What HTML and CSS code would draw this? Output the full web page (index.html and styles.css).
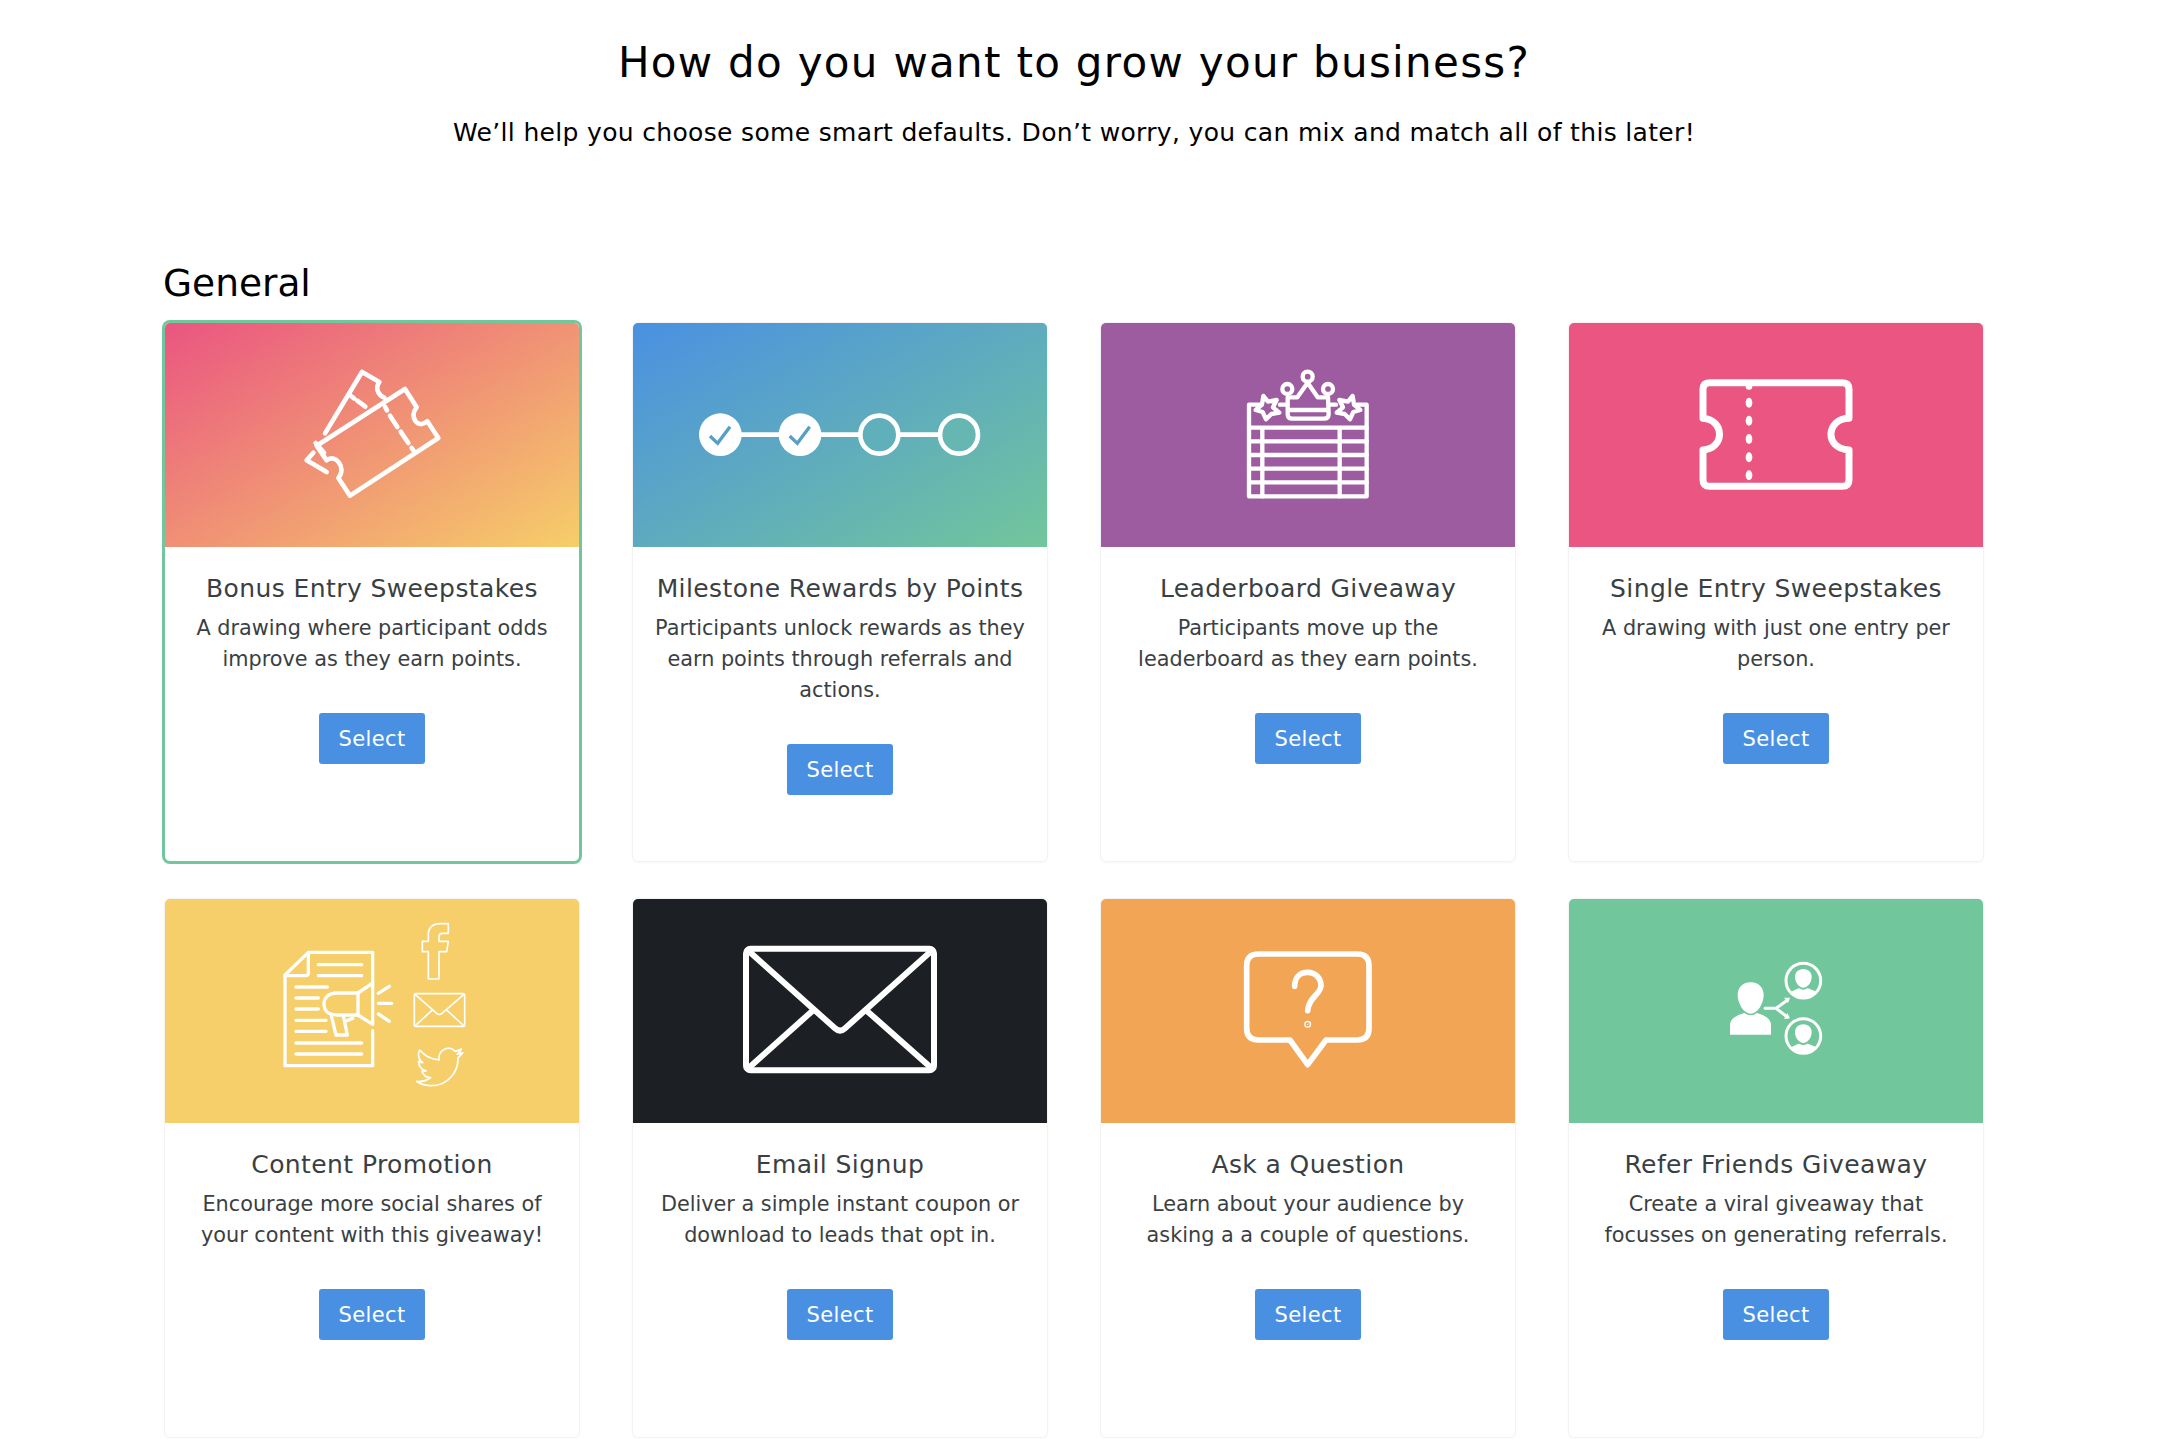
FILE: index.html
```html
<!DOCTYPE html>
<html lang="en">
<head>
    <meta charset="UTF-8">
    <title>Choose a giveaway</title>
    <link rel="stylesheet" href="styles.css">
</head>
<body>
    <div class="page">
        <header class="intro">
            <h1>How do you want to grow your business?</h1>
            <p>We’ll help you choose some smart defaults. Don’t worry, you can mix and match all of this later!</p>
        </header>

        <h2 class="section-title">General</h2>

        <div class="card-grid">
            <div class="card selected">
                <div class="banner bg-sunset">
                    <svg viewBox="45 0 1242 672" class="icon line" stroke-width="14">
                        <path d="M525 331 L636 147 L688 177 C672 200 690 219 703 224"/>
                        <path d="M497 360 L522 389 M470 412 L490 389 M470 412 L530 447"/>
                        <path d="M603 219 L612 226 M622 233 L646 251"/>
                        <path d="M500 368 L765 198 L800 253 C775 282 805 320 832 295 L865 345 L600 518 L565 465 C592 434 555 390 530 412 Z"/>
                        <path d="M705 251 L711 262 M720 278 L742 312 M752 326 L775 360 M785 375 L790 382"/>
                    </svg>
                </div>
                <div class="card-body">
                    <h3>Bonus Entry Sweepstakes</h3>
                    <p>A drawing where participant odds improve as they earn points.</p>
                    <a class="btn">Select</a>
                </div>
            </div>

            <div class="card">
                <div class="banner bg-ocean">
                    <svg viewBox="39 39 1242 672" class="icon">
                        <path d="M301 374 H1017" class="line" stroke-width="14"/>
                        <circle cx="301" cy="374" r="64" fill="#fff"/>
                        <circle cx="540" cy="374" r="64" fill="#fff"/>
                        <circle cx="778" cy="374" r="57" fill="#5fb0bb" stroke="#fff" stroke-width="14"/>
                        <circle cx="1017" cy="374" r="57" fill="#66b6b2" stroke="#fff" stroke-width="14"/>
                        <path d="M270 378 L293 400 L330 350" fill="none" stroke="#539fc6" stroke-width="10"/>
                        <path d="M509 378 L532 400 L569 350" fill="none" stroke="#579fc4" stroke-width="10"/>
                    </svg>
                </div>
                <div class="card-body">
                    <h3>Milestone Rewards by Points</h3>
                    <p>Participants unlock rewards as they earn points through referrals and actions.</p>
                    <a class="btn">Select</a>
                </div>
            </div>

            <div class="card">
                <div class="banner bg-purple">
                    <svg viewBox="33 39 1242 672" class="icon line" stroke-width="13">
                        <path d="M510 284 H477 V559 H830 V284 H800 M570 284 H592 M716 284 H738"/>
                        <path d="M477 353 H830 M477 394 H830 M477 435 H830 M477 476 H830 M477 517 H830 M517 353 V559 M749 353 V559"/>
                        <path d="M593 262 L593 312 Q593 326 606 326 H702 Q716 326 716 312 L714 262 L683 262 L653 218 L622 262 Z M596 300 H712"/>
                        <circle cx="592" cy="237" r="15"/>
                        <circle cx="653" cy="200" r="15"/>
                        <circle cx="714" cy="237" r="15"/>
                        <path class="star-purple" d="M520 258 L534 275 L560 270 L549 292 L568 308 L544 312 L528 328 L518 306 L497 300 L516 284 Z"/>
                        <path class="star-purple" d="M788 258 L774 275 L748 270 L759 292 L740 308 L764 312 L780 328 L790 306 L811 300 L792 284 Z"/>
                    </svg>
                </div>
                <div class="card-body">
                    <h3>Leaderboard Giveaway</h3>
                    <p>Participants move up the leaderboard as they earn points.</p>
                    <a class="btn">Select</a>
                </div>
            </div>

            <div class="card">
                <div class="banner bg-pink">
                    <svg viewBox="27 39 1242 672" class="icon">
                        <path class="line" stroke-width="21" d="M449 218 H847 Q867 218 867 238 V325 C800 325 790 415 867 420 V509 Q867 529 847 529 H449 Q429 529 429 509 V420 C495 415 495 330 429 325 V238 Q429 218 449 218 Z"/>
                        <g fill="#fff">
                            <ellipse cx="567" cy="230" rx="10" ry="9"/>
                            <ellipse cx="567" cy="278" rx="10" ry="15"/>
                            <ellipse cx="567" cy="332" rx="10" ry="15"/>
                            <ellipse cx="567" cy="387" rx="10" ry="15"/>
                            <ellipse cx="567" cy="442" rx="10" ry="15"/>
                            <ellipse cx="567" cy="496" rx="10" ry="15"/>
                        </g>
                    </svg>
                </div>
                <div class="card-body">
                    <h3>Single Entry Sweepstakes</h3>
                    <p>A drawing with just one entry per person.</p>
                    <a class="btn">Select</a>
                </div>
            </div>

            <div class="card">
                <div class="banner bg-yellow">
                    <svg viewBox="-225 0 1242 672" class="icon line" stroke-width="10">
                        <path d="M398 250 V160 H205 L135 228 V500 H398 V395"/>
                        <path d="M205 160 V222 Q205 230 197 230 H135"/>
                        <path d="M235 197 H365 M235 230 H365 M168 264 H262 M168 297 H235 M168 330 H235 M168 364 H258 M168 397 H258 M168 432 H365 M168 465 H365"/>
                        <path d="M354 282 H292 C262 282 252 300 252 315 C252 332 262 348 292 348 H354 Z"/>
                        <path d="M354 282 L398 252 V376 L354 348"/>
                        <path d="M274 350 L288 408 H322 L310 350 M318 366 L338 358"/>
                        <path d="M415 283 L448 262 M415 313 H455 M415 345 L448 367"/>
                        <path stroke-width="5" d="M565 240 V158 H547 V127 H565 V105 C565 85 580 74 600 74 H625 V103 H607 C600 103 597 107 597 113 V127 H625 L620 158 H597 V240 Z"/>
                        <rect x="523" y="284" width="151" height="98" rx="5" stroke-width="5"/>
                        <path stroke-width="5" d="M526 287 L590 343 Q598 350 606 343 L671 287 M526 380 L575 335 M671 380 L622 335"/>
                        <path transform="translate(530 435) scale(5.75)" stroke-width="0.9" d="M23.953 4.57a10 10 0 01-2.825.775 4.958 4.958 0 002.163-2.723c-.951.555-2.005.959-3.127 1.184a4.92 4.92 0 00-8.384 4.482C7.69 8.095 4.067 6.13 1.64 3.162a4.822 4.822 0 00-.666 2.475c0 1.71.87 3.213 2.188 4.096a4.904 4.904 0 01-2.228-.616v.06a4.923 4.923 0 003.946 4.827 4.996 4.996 0 01-2.212.085 4.936 4.936 0 004.604 3.417 9.867 9.867 0 01-6.102 2.105c-.39 0-.779-.023-1.17-.067a13.995 13.995 0 007.557 2.209c9.053 0 13.998-7.496 13.998-13.985 0-.21 0-.42-.015-.63A9.935 9.935 0 0024 4.59z"/>
                    </svg>
                </div>
                <div class="card-body">
                    <h3>Content Promotion</h3>
                    <p>Encourage more social shares of your content with this giveaway!</p>
                    <a class="btn">Select</a>
                </div>
            </div>

            <div class="card">
                <div class="banner bg-dark">
                    <svg viewBox="-261 -60 1242 672" class="icon line" stroke-width="18">
                        <rect x="78" y="89" width="564" height="365" rx="14"/>
                        <path d="M85 95 L345 328 Q360 342 375 328 L635 95"/>
                        <path d="M85 448 L278 275 M635 448 L440 275"/>
                    </svg>
                </div>
                <div class="card-body">
                    <h3>Email Signup</h3>
                    <p>Deliver a simple instant coupon or download to leads that opt in.</p>
                    <a class="btn">Select</a>
                </div>
            </div>

            <div class="card">
                <div class="banner bg-orange">
                    <svg viewBox="-357 -90 1242 672" class="icon line" stroke-width="17">
                        <path d="M115 75 H412 Q447 75 447 110 V298 Q447 333 412 333 H318 L263 407 L210 333 H115 Q80 333 80 298 V110 Q80 75 115 75 Z"/>
                        <path d="M224 172 C224 145 240 130 263 130 C287 130 303 148 303 170 C303 195 265 205 263 245"/>
                        <circle cx="263" cy="286" r="2" fill="#fff"/>
                    </svg>
                </div>
                <div class="card-body">
                    <h3>Ask a Question</h3>
                    <p>Learn about your audience by asking a a couple of questions.</p>
                    <a class="btn">Select</a>
                </div>
            </div>

            <div class="card">
                <div class="banner bg-green">
                    <svg viewBox="-393 -120 1242 672" class="icon">
                        <g fill="#fff">
                            <path d="M152 130 C178 130 192 148 191 170 C190 195 172 224 152 224 C132 224 114 195 113 170 C112 148 126 130 152 130 Z"/>
                            <path d="M90 287 V258 C90 238 112 228 133 222 Q152 236 171 222 C192 228 213 238 213 258 V287 Z"/>
                            <path d="M310 90 C326 90 336 102 335 116 C334 130 323 146 310 146 C297 146 286 130 285 116 C284 102 294 90 310 90 Z"/>
                            <path d="M272 160 C282 153 290 150 298 148 Q310 156 322 148 C330 150 340 153 350 160 C338 174 325 178 310 178 C295 178 282 174 272 160 Z"/>
                            <path d="M310 256 C326 256 336 268 335 282 C334 296 323 312 310 312 C297 312 286 296 285 282 C284 268 294 256 310 256 Z"/>
                            <path d="M272 326 C282 319 290 316 298 314 Q310 322 322 314 C330 316 340 319 350 326 C338 340 325 344 310 344 C295 344 282 340 272 326 Z"/>
                            <path d="M270 176 L252 176 L264 192 Z M270 238 L252 240 L262 222 Z"/>
                        </g>
                        <g class="line" stroke-width="9">
                            <circle cx="310" cy="125" r="52"/>
                            <circle cx="310" cy="291" r="52"/>
                            <path d="M195 208 H228 L262 184 M228 208 L262 234"/>
                        </g>
                    </svg>
                </div>
                <div class="card-body">
                    <h3>Refer Friends Giveaway</h3>
                    <p>Create a viral giveaway that focusses on generating referrals.</p>
                    <a class="btn">Select</a>
                </div>
            </div>
        </div>
    </div>
</body>
</html>
```

FILE: styles.css
```css
body {
    margin: 0;
    background-color: #fff;
    color: #000;
    font-family: "DejaVu Sans", Verdana, sans-serif;
}

.page {
    width: 1820px;
    margin: 0 176px 0 164px;
}

.intro {
    text-align: center;
    padding-top: 37px;
}

.intro h1 {
    font-size: 42px;
    font-weight: normal;
    letter-spacing: 1.3px;
    line-height: 52px;
    margin: 0;
}

.intro p {
    font-size: 25px;
    letter-spacing: 0.33px;
    line-height: 36px;
    margin: 26px 0 0;
}

.section-title {
    font-size: 37.5px;
    font-weight: normal;
    line-height: 48px;
    margin: 108px 0 15px -1px;
}

.card-grid {
    display: grid;
    grid-template-columns: repeat(4, 416px);
    grid-auto-rows: 540px;
    column-gap: 52px;
    row-gap: 36px;
}

.card {
    display: flex;
    flex-direction: column;
    background-color: #fff;
    border: 1px solid #f3f3f4;
    border-radius: 6px;
    box-shadow: 0 1px 3px rgba(0, 0, 0, 0.03);
}

.card.selected {
    border-color: #72c69b;
    box-shadow: 0 0 0 2px #72c69b;
}

.banner {
    height: 224px;
    border-radius: 5px 5px 0 0;
    overflow: hidden;
}

.bg-sunset { background: linear-gradient(150deg, #ea5581, #f6ce69); }
.bg-ocean { background: linear-gradient(150deg, #4a90e2, #72c69b); }
.bg-purple { background-color: #9c5c9f; }
.bg-pink { background-color: #ea5581; }
.bg-yellow { background-color: #f6ce6a; }
.bg-dark { background-color: #1c2024; }
.bg-orange { background-color: #f1a555; }
.bg-green { background-color: #72c69b; }

.icon {
    display: block;
    width: 100%;
    height: 100%;
}

.line {
    fill: none;
    stroke: #fff;
    stroke-linecap: round;
    stroke-linejoin: round;
}

.star-purple {
    fill: #9c5c9f;
}

.card-body {
    text-align: center;
    padding: 25px 20px 0;
    color: #3a3f44;
}

.card-body h3 {
    font-size: 25px;
    font-weight: normal;
    letter-spacing: 0.4px;
    line-height: 34px;
    margin: 0;
}

.card-body p {
    font-size: 20.8px;
    line-height: 31px;
    margin: 7px 0 0;
}

.btn {
    display: block;
    width: 106px;
    height: 51px;
    line-height: 52px;
    margin: 38px auto 0;
    background-color: #4a90e2;
    border-radius: 3px;
    color: #fff;
    font-size: 21px;
    letter-spacing: 0.4px;
}
```
